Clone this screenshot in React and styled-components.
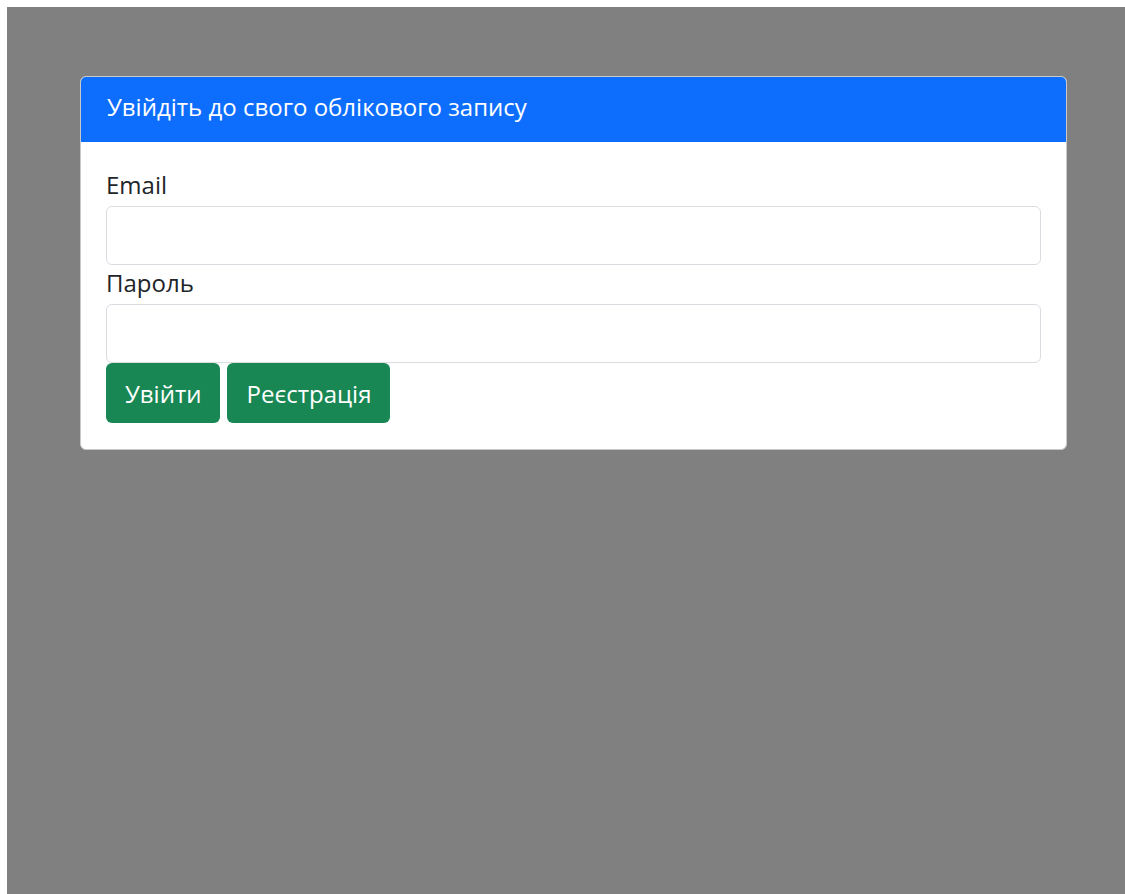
import React from 'react';
import styled, { createGlobalStyle } from 'styled-components';

const GlobalStyle = createGlobalStyle`
  html, body {
    margin: 0;
    padding: 0;
  }

  body {
    margin: 7px 0 0 7px;
    font-family: "Open Sans", "Noto Sans", "DejaVu Sans", sans-serif;
    color: #212529;
    overflow: hidden;
  }
`;

const Backdrop = styled.div`
  min-height: calc(100vh - 7px);
  background: #808080;
  padding: 69px 0 0 73px;
  box-sizing: border-box;
`;

const Card = styled.div`
  width: 987px;
  box-sizing: border-box;
  background: #fff;
  border: 1px solid #c9c9c9;
  border-radius: 6px;
  overflow: hidden;
`;

const CardHeader = styled.div`
  background: #0d6efd;
  color: #fff;
  font-size: 24px;
  line-height: 36px;
  padding: 12px 26px 17px;
`;

const CardBody = styled.form`
  padding: 25px 25px 26px;
`;

const Label = styled.label`
  display: block;
  font-size: 24px;
  line-height: 36px;
  margin-bottom: 3px;
`;

const Input = styled.input`
  display: block;
  width: 100%;
  height: 59px;
  box-sizing: border-box;
  border: 1px solid #d9dde2;
  border-radius: 6px;
  padding: 0 16px;
  font: inherit;
  font-size: 24px;
  outline: none;
`;

const Actions = styled.div`
  display: flex;
  gap: 7px;
`;

const Button = styled.button`
  height: 60px;
  padding: 0 19px;
  border: none;
  border-radius: 6px;
  background: #198754;
  color: #fff;
  font-family: inherit;
  font-size: 24px;
  cursor: pointer;

  &:hover {
    background: #157347;
  }
`;

export default function App() {
  return (
    <>
      <GlobalStyle />
      <Backdrop>
        <Card>
          <CardHeader>Увійдіть до свого облікового запису</CardHeader>
          <CardBody onSubmit={(e) => e.preventDefault()}>
            <Label htmlFor="email">Email</Label>
            <Input id="email" type="email" />
            <Label htmlFor="password">Пароль</Label>
            <Input id="password" type="password" />
            <Actions>
              <Button type="submit">Увійти</Button>
              <Button type="button">Реєстрація</Button>
            </Actions>
          </CardBody>
        </Card>
      </Backdrop>
    </>
  );
}
